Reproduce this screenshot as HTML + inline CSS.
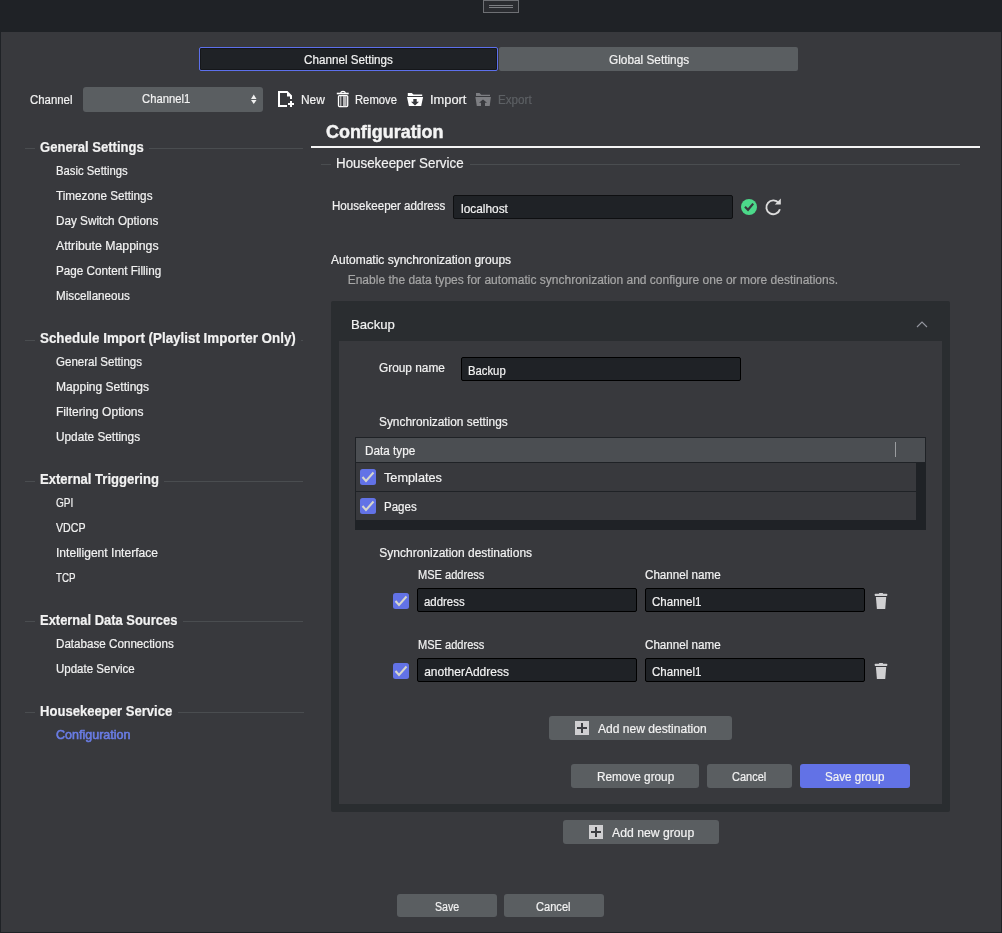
<!DOCTYPE html>
<html><head><meta charset="utf-8"><style>
html,body{margin:0;padding:0;width:1002px;height:933px;overflow:hidden;background:#1f2226;font-family:"Liberation Sans",sans-serif;}
#root{position:relative;width:1002px;height:933px;overflow:hidden;}
#root div{-webkit-font-smoothing:antialiased;-webkit-text-stroke:0.2px currentColor;}
#root{will-change:transform;}
svg{position:absolute;left:0;top:0;}
</style></head><body><div id="root">
<div style="position:absolute;left:1px;top:32px;width:1000px;height:900px;background:#38393d;"></div>
<div style="position:absolute;left:483px;top:0px;width:36px;height:13px;border:1px solid #6e7074;box-sizing:border-box;background:#2a2c30;"></div>
<div style="position:absolute;left:489px;top:5px;width:24px;height:1px;background:#7c7e82;"></div>
<div style="position:absolute;left:489px;top:7px;width:24px;height:1px;background:#7c7e82;"></div>
<div style="position:absolute;left:199px;top:47px;width:299px;height:24px;background:#1f2226;border:1px solid #5d70ec;box-sizing:border-box;border-radius:2px;box-shadow:inset 0 0 0 1px #15171a;"></div>
<div style="position:absolute;left:304.10px;top:51.64px;line-height:16px;font-size:12px;font-weight:400;color:#f2f2f2;white-space:nowrap;transform:scaleX(0.9726);transform-origin:0.00px 0;">Channel Settings</div>
<div style="position:absolute;left:499px;top:47px;width:299px;height:24px;background:#5a5e61;border-radius:2px;"></div>
<div style="position:absolute;left:609.00px;top:51.64px;line-height:16px;font-size:12px;font-weight:400;color:#f2f2f2;white-space:nowrap;transform:scaleX(0.9853);transform-origin:0.00px 0;">Global Settings</div>
<div style="position:absolute;left:30.20px;top:91.54px;line-height:16px;font-size:12px;font-weight:400;color:#f2f2f2;white-space:nowrap;transform:scaleX(0.9508);transform-origin:0.00px 0;">Channel</div>
<div style="position:absolute;left:83px;top:87px;width:180px;height:25px;background:#5a5e61;border-radius:3px;"></div>
<div style="position:absolute;left:142.20px;top:91.44px;line-height:16px;font-size:12px;font-weight:400;color:#f2f2f2;white-space:nowrap;transform:scaleX(0.9377);transform-origin:0.00px 0;">Channel1</div>
<svg width="1002" height="933" style="pointer-events:none"><path d="M251,99 L253.75,94.5 L256.5,99 Z M251,100 L253.75,104 L256.5,100 Z" fill="#f0f0f0"/><path d="M278,91 H287.5 L292,95.5 V99 H290 V96.5 H287 V93 H280 V105 H287 V107 H278 Z" fill="#ffffff"/><rect x="288" y="103" width="6" height="2" fill="#fff"/><rect x="290" y="101" width="2" height="6" fill="#fff"/><path d="M340.7,93 Q341,91.3 343,91.3 Q345,91.3 345.3,93" stroke="#fff" stroke-width="1.3" fill="none"/><rect x="336.8" y="92.7" width="11.9" height="1.6" fill="#fff"/><rect x="338.5" y="95.6" width="9.2" height="11" rx="1" stroke="#fff" stroke-width="1.3" fill="none"/><rect x="340.3" y="96" width="1" height="10" fill="#ddd"/><rect x="343" y="96" width="3.6" height="10.2" fill="#b4b4b6"/><path d="M407.8,92.9 H411.8 L413.5,94.6 H422.2 V96 H407.8 Z" fill="#fff"/><path d="M407,96.9 H423.1 L421.2,106 H408.9 Z M413.3,99 V101.8 H411 L415,105.4 L419,101.8 H416.7 V99 Z" fill="#fff" fill-rule="evenodd"/><path d="M476,93 H479.5 L481.2,94.7 H490 V96 H476 Z" fill="#7d7e82"/><path d="M475.4,97.1 H490.9 L489.7,106 H485 V102.7 H487 L483,99.5 L479,102.7 H481 V106 H476.8 Z" fill="#7d7e82"/></svg>
<div style="position:absolute;left:300.70px;top:91.54px;line-height:16px;font-size:12px;font-weight:400;color:#f2f2f2;white-space:nowrap;transform:scaleX(0.9938);transform-origin:0.00px 0;">New</div>
<div style="position:absolute;left:354.60px;top:91.54px;line-height:16px;font-size:12px;font-weight:400;color:#f2f2f2;white-space:nowrap;transform:scaleX(0.9374);transform-origin:0.00px 0;">Remove</div>
<div style="position:absolute;left:429.50px;top:91.54px;line-height:16px;font-size:12px;font-weight:400;color:#f2f2f2;white-space:nowrap;transform:scaleX(1.0706);transform-origin:0.00px 0;">Import</div>
<div style="position:absolute;left:498.00px;top:91.54px;line-height:16px;font-size:12px;font-weight:400;color:#5d6064;white-space:nowrap;transform:scaleX(0.9712);transform-origin:0.00px 0;">Export</div>
<div style="position:absolute;left:40.20px;top:138.28px;line-height:19px;font-size:14.5px;font-weight:700;color:#f2f2f2;white-space:nowrap;transform:scaleX(0.9007);transform-origin:0.00px 0;">General Settings</div>
<div style="position:absolute;left:25px;top:148px;width:10px;height:1px;background:#4a4d50;"></div>
<div style="position:absolute;left:149px;top:148px;width:154px;height:1px;background:#4a4d50;"></div>
<div style="position:absolute;left:55.50px;top:163.04px;line-height:16px;font-size:12px;font-weight:400;color:#f2f2f2;white-space:nowrap;transform:scaleX(0.9428);transform-origin:0.00px 0;">Basic Settings</div>
<div style="position:absolute;left:55.50px;top:188.04px;line-height:16px;font-size:12px;font-weight:400;color:#f2f2f2;white-space:nowrap;transform:scaleX(0.9752);transform-origin:0.00px 0;">Timezone Settings</div>
<div style="position:absolute;left:55.50px;top:213.04px;line-height:16px;font-size:12px;font-weight:400;color:#f2f2f2;white-space:nowrap;transform:scaleX(0.9771);transform-origin:0.00px 0;">Day Switch Options</div>
<div style="position:absolute;left:55.50px;top:238.04px;line-height:16px;font-size:12px;font-weight:400;color:#f2f2f2;white-space:nowrap;transform:scaleX(1.0255);transform-origin:0.00px 0;">Attribute Mappings</div>
<div style="position:absolute;left:55.50px;top:263.04px;line-height:16px;font-size:12px;font-weight:400;color:#f2f2f2;white-space:nowrap;transform:scaleX(0.9736);transform-origin:0.00px 0;">Page Content Filling</div>
<div style="position:absolute;left:55.50px;top:288.04px;line-height:16px;font-size:12px;font-weight:400;color:#f2f2f2;white-space:nowrap;transform:scaleX(0.9717);transform-origin:0.00px 0;">Miscellaneous</div>
<div style="position:absolute;left:40.20px;top:329.28px;line-height:19px;font-size:14.5px;font-weight:700;color:#f2f2f2;white-space:nowrap;transform:scaleX(0.9230);transform-origin:0.00px 0;">Schedule Import (Playlist Importer Only)</div>
<div style="position:absolute;left:25px;top:340px;width:10px;height:1px;background:#4a4d50;"></div>
<div style="position:absolute;left:301px;top:340px;width:2px;height:1px;background:#4a4d50;"></div>
<div style="position:absolute;left:55.50px;top:354.04px;line-height:16px;font-size:12px;font-weight:400;color:#f2f2f2;white-space:nowrap;transform:scaleX(0.9620);transform-origin:0.00px 0;">General Settings</div>
<div style="position:absolute;left:55.50px;top:379.04px;line-height:16px;font-size:12px;font-weight:400;color:#f2f2f2;white-space:nowrap;transform:scaleX(1.0038);transform-origin:0.00px 0;">Mapping Settings</div>
<div style="position:absolute;left:55.50px;top:404.04px;line-height:16px;font-size:12px;font-weight:400;color:#f2f2f2;white-space:nowrap;transform:scaleX(1.0023);transform-origin:0.00px 0;">Filtering Options</div>
<div style="position:absolute;left:55.50px;top:429.04px;line-height:16px;font-size:12px;font-weight:400;color:#f2f2f2;white-space:nowrap;transform:scaleX(0.9848);transform-origin:0.00px 0;">Update Settings</div>
<div style="position:absolute;left:40.20px;top:470.48px;line-height:19px;font-size:14.5px;font-weight:700;color:#f2f2f2;white-space:nowrap;transform:scaleX(0.8997);transform-origin:0.00px 0;">External Triggering</div>
<div style="position:absolute;left:25px;top:481px;width:10px;height:1px;background:#4a4d50;"></div>
<div style="position:absolute;left:164px;top:481px;width:139px;height:1px;background:#4a4d50;"></div>
<div style="position:absolute;left:55.50px;top:495.24px;line-height:16px;font-size:12px;font-weight:400;color:#f2f2f2;white-space:nowrap;transform:scaleX(0.8378);transform-origin:0.00px 0;">GPI</div>
<div style="position:absolute;left:55.50px;top:520.24px;line-height:16px;font-size:12px;font-weight:400;color:#f2f2f2;white-space:nowrap;transform:scaleX(0.8846);transform-origin:0.00px 0;">VDCP</div>
<div style="position:absolute;left:55.50px;top:545.24px;line-height:16px;font-size:12px;font-weight:400;color:#f2f2f2;white-space:nowrap;transform:scaleX(1.0059);transform-origin:0.00px 0;">Intelligent Interface</div>
<div style="position:absolute;left:55.50px;top:570.24px;line-height:16px;font-size:12px;font-weight:400;color:#f2f2f2;white-space:nowrap;transform:scaleX(0.8125);transform-origin:0.00px 0;">TCP</div>
<div style="position:absolute;left:40.20px;top:611.18px;line-height:19px;font-size:14.5px;font-weight:700;color:#f2f2f2;white-space:nowrap;transform:scaleX(0.8925);transform-origin:0.00px 0;">External Data Sources</div>
<div style="position:absolute;left:25px;top:621px;width:10px;height:1px;background:#4a4d50;"></div>
<div style="position:absolute;left:183px;top:621px;width:120px;height:1px;background:#4a4d50;"></div>
<div style="position:absolute;left:55.50px;top:635.94px;line-height:16px;font-size:12px;font-weight:400;color:#f2f2f2;white-space:nowrap;transform:scaleX(0.9695);transform-origin:0.00px 0;">Database Connections</div>
<div style="position:absolute;left:55.50px;top:660.94px;line-height:16px;font-size:12px;font-weight:400;color:#f2f2f2;white-space:nowrap;transform:scaleX(0.9592);transform-origin:0.00px 0;">Update Service</div>
<div style="position:absolute;left:40.20px;top:702.18px;line-height:19px;font-size:14.5px;font-weight:700;color:#f2f2f2;white-space:nowrap;transform:scaleX(0.9018);transform-origin:0.00px 0;">Housekeeper Service</div>
<div style="position:absolute;left:25px;top:712px;width:10px;height:1px;background:#4a4d50;"></div>
<div style="position:absolute;left:178px;top:712px;width:126px;height:1px;background:#4a4d50;"></div>
<div style="position:absolute;left:55.50px;top:726.94px;line-height:16px;font-size:12px;font-weight:400;color:#6a7de6;white-space:nowrap;transform:scaleX(1.0434);transform-origin:0.00px 0;-webkit-text-stroke:0.55px currentColor;">Configuration</div>
<div style="position:absolute;left:326.20px;top:120.39px;line-height:24px;font-size:18.5px;font-weight:700;color:#f4f4f4;white-space:nowrap;transform:scaleX(0.9691);transform-origin:0.00px 0;-webkit-text-stroke:0.5px currentColor;">Configuration</div>
<div style="position:absolute;left:311px;top:146px;width:669px;height:2px;background:#f4f4f4;"></div>
<div style="position:absolute;left:336.40px;top:153.58px;line-height:19px;font-size:14.5px;font-weight:400;color:#f2f2f2;white-space:nowrap;transform:scaleX(0.9203);transform-origin:0.00px 0;">Housekeeper Service</div>
<div style="position:absolute;left:321px;top:164px;width:10px;height:1px;background:#4a4d50;"></div>
<div style="position:absolute;left:470px;top:164px;width:490px;height:1px;background:#4a4d50;"></div>
<div style="position:absolute;left:331.70px;top:197.74px;line-height:16px;font-size:12px;font-weight:400;color:#f2f2f2;white-space:nowrap;transform:scaleX(0.9651);transform-origin:0.00px 0;">Housekeeper address</div>
<div style="position:absolute;left:453px;top:195px;width:280px;height:24px;background:#1f2226;border:1px solid #0e0f11;box-sizing:border-box;border-radius:2px;"></div>
<div style="position:absolute;left:460.50px;top:200.74px;line-height:16px;font-size:12px;font-weight:400;color:#f2f2f2;white-space:nowrap;transform:scaleX(0.9905);transform-origin:0.00px 0;">localhost</div>
<svg width="1002" height="933" style="pointer-events:none"><circle cx="749" cy="207" r="8" fill="#4cd98a"/><path d="M745,206.8 L748,209.8 L753.2,203.6" stroke="#38393d" stroke-width="2.2" fill="none"/><path d="M778.8,203.2 A6.9,6.9 0 1 0 779.9,209.2" stroke="#dcdcdc" stroke-width="1.9" fill="none"/><path d="M774.8,204.6 L780.8,204.6 L780.8,198.6 Z" fill="#dcdcdc"/></svg>
<div style="position:absolute;left:331.00px;top:251.94px;line-height:16px;font-size:12px;font-weight:400;color:#f2f2f2;white-space:nowrap;">Automatic synchronization groups</div>
<div style="position:absolute;left:347.70px;top:271.84px;line-height:16px;font-size:12px;font-weight:400;color:#a6a6a6;white-space:nowrap;transform:scaleX(1.0000);transform-origin:0.00px 0;">Enable the data types for automatic synchronization and configure one or more destinations.</div>
<div style="position:absolute;left:331px;top:301px;width:619px;height:511px;background:#2a2d30;border-radius:2px;"></div>
<div style="position:absolute;left:339px;top:341px;width:603px;height:463px;background:#38393d;"></div>
<div style="position:absolute;left:351.40px;top:315.72px;line-height:18px;font-size:13.5px;font-weight:400;color:#f2f2f2;white-space:nowrap;transform:scaleX(0.9745);transform-origin:0.00px 0;">Backup</div>
<svg width="1002" height="933" style="pointer-events:none"><path d="M917,327 L922,322 L927,327" stroke="#9597a0" stroke-width="1.1" fill="none"/></svg>
<div style="position:absolute;left:378.90px;top:360.14px;line-height:16px;font-size:12px;font-weight:400;color:#f2f2f2;white-space:nowrap;transform:scaleX(0.9880);transform-origin:0.00px 0;">Group name</div>
<div style="position:absolute;left:461px;top:357px;width:280px;height:24px;background:#1f2226;border:1px solid #000;box-sizing:border-box;border-radius:2px;"></div>
<div style="position:absolute;left:468.30px;top:363.14px;line-height:16px;font-size:12px;font-weight:400;color:#f2f2f2;white-space:nowrap;transform:scaleX(0.9413);transform-origin:0.00px 0;">Backup</div>
<div style="position:absolute;left:379.00px;top:413.64px;line-height:16px;font-size:12px;font-weight:400;color:#f2f2f2;white-space:nowrap;transform:scaleX(0.9892);transform-origin:0.00px 0;">Synchronization settings</div>
<div style="position:absolute;left:355px;top:437px;width:571px;height:93px;background:#1f2226;"></div>
<div style="position:absolute;left:356px;top:438px;width:569px;height:24px;background:#4b4e52;"></div>
<div style="position:absolute;left:895px;top:442px;width:1px;height:15px;background:#9a9c9f;"></div>
<div style="position:absolute;left:364.70px;top:442.54px;line-height:16px;font-size:12px;font-weight:400;color:#f2f2f2;white-space:nowrap;transform:scaleX(0.9796);transform-origin:0.00px 0;">Data type</div>
<div style="position:absolute;left:356px;top:463px;width:560px;height:28px;background:#38393d;"></div>
<div style="position:absolute;left:356px;top:492px;width:560px;height:28px;background:#38393d;"></div>
<svg width="1002" height="933" style="pointer-events:none"><rect x="360" y="469" width="16" height="16" rx="2.5" fill="#6272e6"/><path d="M362.5,477 L366,481 L373.5,472.5" stroke="#d6d6cc" stroke-width="2" fill="none"/></svg>
<div style="position:absolute;left:384.10px;top:469.84px;line-height:16px;font-size:12px;font-weight:400;color:#f2f2f2;white-space:nowrap;transform:scaleX(1.0585);transform-origin:0.00px 0;">Templates</div>
<svg width="1002" height="933" style="pointer-events:none"><rect x="360" y="498" width="16" height="16" rx="2.5" fill="#6272e6"/><path d="M362.5,506 L366,510 L373.5,501.5" stroke="#d6d6cc" stroke-width="2" fill="none"/></svg>
<div style="position:absolute;left:384.10px;top:498.64px;line-height:16px;font-size:12px;font-weight:400;color:#f2f2f2;white-space:nowrap;transform:scaleX(0.9604);transform-origin:0.00px 0;">Pages</div>
<div style="position:absolute;left:379.30px;top:544.64px;line-height:16px;font-size:12px;font-weight:400;color:#f2f2f2;white-space:nowrap;">Synchronization destinations</div>
<div style="position:absolute;left:417.60px;top:566.74px;line-height:16px;font-size:12px;font-weight:400;color:#f2f2f2;white-space:nowrap;transform:scaleX(0.9216);transform-origin:0.00px 0;">MSE address</div>
<div style="position:absolute;left:645.00px;top:566.84px;line-height:16px;font-size:12px;font-weight:400;color:#f2f2f2;white-space:nowrap;transform:scaleX(0.9686);transform-origin:0.00px 0;">Channel name</div>
<svg width="1002" height="933" style="pointer-events:none"><rect x="393" y="593" width="16" height="16" rx="2.5" fill="#6272e6"/><path d="M395.5,601 L399,605 L406.5,596.5" stroke="#d6d6cc" stroke-width="2" fill="none"/></svg>
<div style="position:absolute;left:417px;top:588px;width:220px;height:24px;background:#1f2226;border:1px solid #000;box-sizing:border-box;border-radius:2px;"></div>
<div style="position:absolute;left:645px;top:588px;width:220px;height:24px;background:#1f2226;border:1px solid #000;box-sizing:border-box;border-radius:2px;"></div>
<div style="position:absolute;left:651.60px;top:593.84px;line-height:16px;font-size:12px;font-weight:400;color:#f2f2f2;white-space:nowrap;transform:scaleX(0.9611);transform-origin:0.00px 0;">Channel1</div>
<svg width="1002" height="933" style="pointer-events:none"><rect x="879.0" y="593.0" width="4" height="1.5" rx="0.5" fill="#d0d0d2"/><rect x="874.8" y="593.7" width="12.4" height="2.4" rx="0.5" fill="#d0d0d2"/><path d="M875.9,596.9000000000001 H886.1999999999999 L885.1999999999999,609.0 H876.9 Z" fill="#d0d0d2"/></svg>
<div style="position:absolute;left:417.60px;top:636.74px;line-height:16px;font-size:12px;font-weight:400;color:#f2f2f2;white-space:nowrap;transform:scaleX(0.9216);transform-origin:0.00px 0;">MSE address</div>
<div style="position:absolute;left:645.00px;top:636.84px;line-height:16px;font-size:12px;font-weight:400;color:#f2f2f2;white-space:nowrap;transform:scaleX(0.9686);transform-origin:0.00px 0;">Channel name</div>
<svg width="1002" height="933" style="pointer-events:none"><rect x="393" y="663" width="16" height="16" rx="2.5" fill="#6272e6"/><path d="M395.5,671 L399,675 L406.5,666.5" stroke="#d6d6cc" stroke-width="2" fill="none"/></svg>
<div style="position:absolute;left:417px;top:658px;width:220px;height:24px;background:#1f2226;border:1px solid #000;box-sizing:border-box;border-radius:2px;"></div>
<div style="position:absolute;left:645px;top:658px;width:220px;height:24px;background:#1f2226;border:1px solid #000;box-sizing:border-box;border-radius:2px;"></div>
<div style="position:absolute;left:651.60px;top:663.84px;line-height:16px;font-size:12px;font-weight:400;color:#f2f2f2;white-space:nowrap;transform:scaleX(0.9611);transform-origin:0.00px 0;">Channel1</div>
<svg width="1002" height="933" style="pointer-events:none"><rect x="879.0" y="663.0" width="4" height="1.5" rx="0.5" fill="#d0d0d2"/><rect x="874.8" y="663.7" width="12.4" height="2.4" rx="0.5" fill="#d0d0d2"/><path d="M875.9,666.9000000000001 H886.1999999999999 L885.1999999999999,679.0 H876.9 Z" fill="#d0d0d2"/></svg>
<div style="position:absolute;left:424.20px;top:593.84px;line-height:16px;font-size:12px;font-weight:400;color:#f2f2f2;white-space:nowrap;transform:scaleX(0.9508);transform-origin:0.00px 0;">address</div>
<div style="position:absolute;left:424.20px;top:663.84px;line-height:16px;font-size:12px;font-weight:400;color:#f2f2f2;white-space:nowrap;">anotherAddress</div>
<div style="position:absolute;left:549px;top:716px;width:183px;height:24px;background:#5a5e61;border-radius:3px;"></div>
<svg width="1002" height="933" style="pointer-events:none"><rect x="575" y="721" width="14" height="14" fill="#cfcfd1"/><rect x="577" y="727" width="10" height="2" fill="#3c3e42"/><rect x="581" y="723" width="2" height="10" fill="#3c3e42"/></svg>
<div style="position:absolute;left:598.30px;top:720.84px;line-height:16px;font-size:12px;font-weight:400;color:#f2f2f2;white-space:nowrap;transform:scaleX(1.0056);transform-origin:0.00px 0;">Add new destination</div>
<div style="position:absolute;left:571px;top:764px;width:128px;height:24px;background:#5a5e61;border-radius:3px;"></div>
<div style="position:absolute;left:596.50px;top:769.04px;line-height:16px;font-size:12px;font-weight:400;color:#f2f2f2;white-space:nowrap;transform:scaleX(0.9809);transform-origin:0.00px 0;">Remove group</div>
<div style="position:absolute;left:707px;top:764px;width:85px;height:24px;background:#5a5e61;border-radius:3px;"></div>
<div style="position:absolute;left:732.30px;top:768.84px;line-height:16px;font-size:12px;font-weight:400;color:#f2f2f2;white-space:nowrap;transform:scaleX(0.9157);transform-origin:0.00px 0;">Cancel</div>
<div style="position:absolute;left:800px;top:764px;width:110px;height:24px;background:#6272e6;border-radius:3px;"></div>
<div style="position:absolute;left:825.00px;top:768.84px;line-height:16px;font-size:12px;font-weight:400;color:#f2f2f2;white-space:nowrap;transform:scaleX(0.9674);transform-origin:0.00px 0;">Save group</div>
<div style="position:absolute;left:563px;top:820px;width:156px;height:24px;background:#5a5e61;border-radius:3px;"></div>
<svg width="1002" height="933" style="pointer-events:none"><rect x="589" y="825" width="14" height="14" fill="#cfcfd1"/><rect x="591" y="831" width="10" height="2" fill="#3c3e42"/><rect x="595" y="827" width="2" height="10" fill="#3c3e42"/></svg>
<div style="position:absolute;left:612.00px;top:824.84px;line-height:16px;font-size:12px;font-weight:400;color:#f2f2f2;white-space:nowrap;transform:scaleX(1.0180);transform-origin:0.00px 0;">Add new group</div>
<div style="position:absolute;left:397px;top:894px;width:100px;height:23px;background:#5a5e61;border-radius:3px;"></div>
<div style="position:absolute;left:435.00px;top:898.84px;line-height:16px;font-size:12px;font-weight:400;color:#f2f2f2;white-space:nowrap;transform:scaleX(0.8848);transform-origin:0.00px 0;">Save</div>
<div style="position:absolute;left:504px;top:894px;width:100px;height:23px;background:#5a5e61;border-radius:3px;"></div>
<div style="position:absolute;left:536.00px;top:898.84px;line-height:16px;font-size:12px;font-weight:400;color:#f2f2f2;white-space:nowrap;transform:scaleX(0.9237);transform-origin:0.00px 0;">Cancel</div>
</div></body></html>
